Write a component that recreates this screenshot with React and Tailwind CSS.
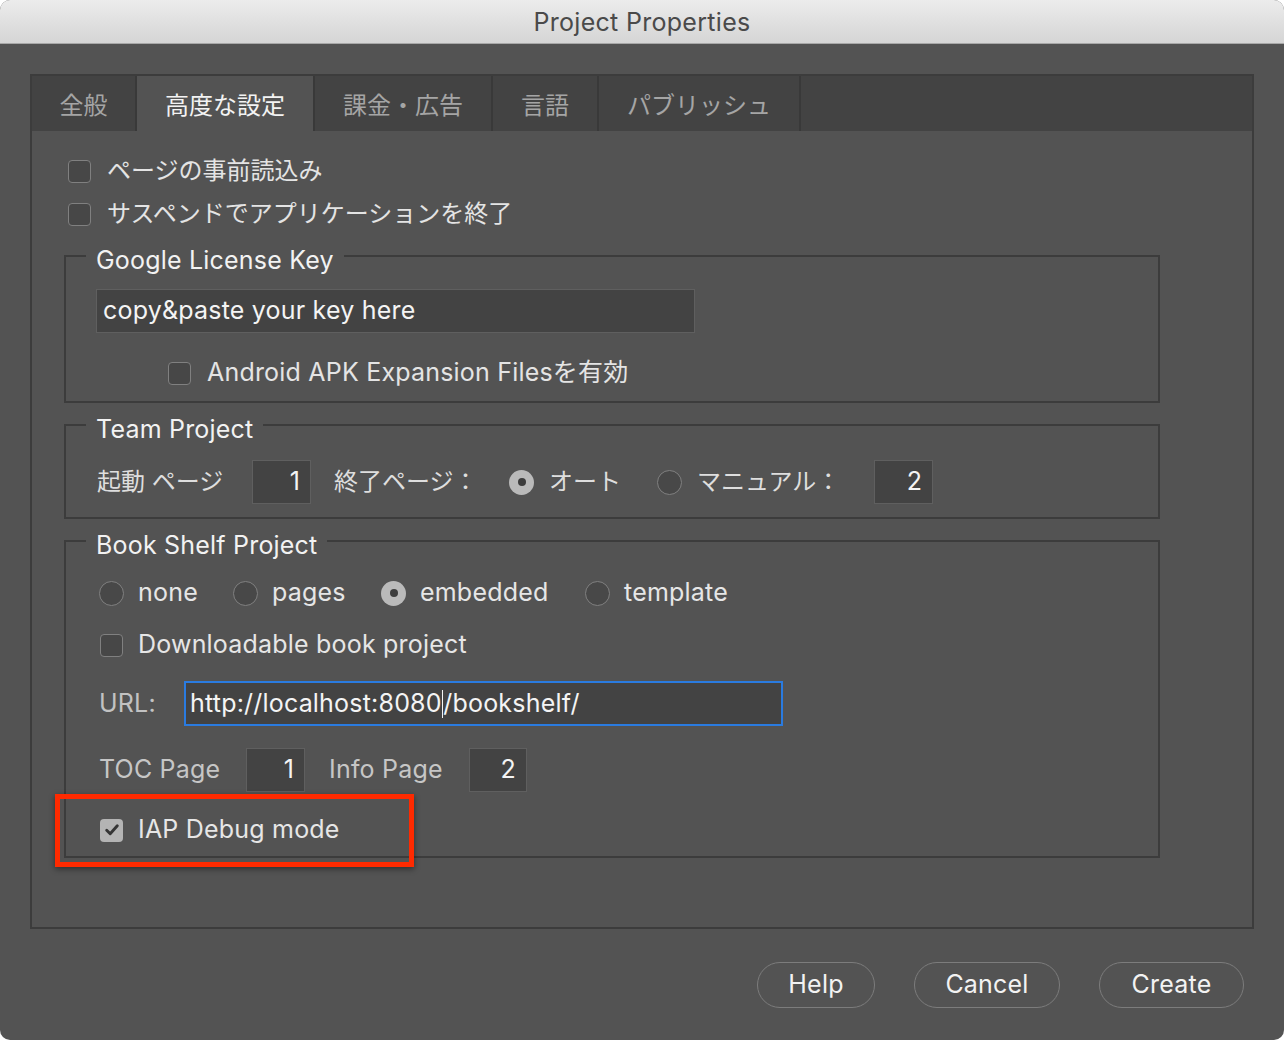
import React from 'react';

function Checkbox({ checked }) {
    if (checked) {
        return (
            <span className="flex h-[23px] w-[23px] shrink-0 items-center justify-center rounded-[4px] bg-[#b4b4b4]">
                <svg viewBox="0 0 16 16" className="h-[18px] w-[18px]">
                    <path d="M3.3 8.2l3.1 3.1 6.3-7" fill="none" stroke="#353535" strokeWidth="2.6" strokeLinecap="round" strokeLinejoin="round" />
                </svg>
            </span>
        );
    }
    return <span className="h-[23px] w-[23px] shrink-0 rounded-[4px] border-[1.5px] border-[#808080] bg-[#474747]" />;
}

function Radio({ checked }) {
    if (checked) {
        return (
            <span className="flex h-[25px] w-[25px] shrink-0 items-center justify-center rounded-full bg-[#bababa]">
                <span className="h-[8px] w-[8px] rounded-full bg-[#3d3d3d]" />
            </span>
        );
    }
    return <span className="h-[25px] w-[25px] shrink-0 rounded-full border-[1.5px] border-[#808080] bg-[#484848]" />;
}

function NumBox({ value, w = 'w-[59px]' }) {
    return (
        <div className={`flex h-[44px] ${w} shrink-0 items-center justify-end border border-[#5f5f5f] bg-[#434343] pr-[10px] text-[25px] text-[#f4f4f4]`}>
            {value}
        </div>
    );
}

function Group({ title, className, children }) {
    return (
        <fieldset className={`ml-[32px] w-[1096px] border-2 border-[#3c3c3c] p-0 ${className}`}>
            <legend className="ml-[20px] px-[10px] text-[25px] leading-[30px] tracking-[0.2px] text-[#f2f2f2]">
                <span className="relative top-[4px]">{title}</span>
            </legend>
            <div className="pl-[30px]">{children}</div>
        </fieldset>
    );
}

const tabs = [
    { label: '全般', w: 'w-[105px]' },
    { label: '高度な設定', w: 'w-[178px]', active: true },
    { label: '課金・広告', w: 'w-[178px]' },
    { label: '言語', w: 'w-[106px]' },
    { label: 'パブリッシュ', w: 'w-[202px]' },
];

export default function App() {
    return (
        <div className="relative h-[1040px] w-[1284px] overflow-hidden rounded-[10px] bg-[#535353] font-['Inter','Noto_Sans_CJK_JP',sans-serif]">

            {/* Title bar */}
            <div className="flex h-[44px] items-center justify-center border-b border-[#a8a8a8] bg-gradient-to-b from-[#ececec] to-[#d5d5d5] pt-[3px]">
                <span className="text-[25px] tracking-[0.3px] text-[#4a4a4a]">Project Properties</span>
            </div>

            {/* Tab panel */}
            <div className="ml-[30px] mt-[30px] flex h-[855px] w-[1224px] flex-col border-2 border-[#3c3c3c]">
                <div className="flex h-[55px] shrink-0 bg-[#434343]">
                    {tabs.map((t) => (
                        <div
                            key={t.label}
                            className={`flex ${t.w} items-center justify-center border-r-2 border-[#393939] pt-[5px] text-[24px] ${
                                t.active ? 'bg-[#535353] text-[#f3f3f3]' : 'text-[#a5a5a5]'
                            }`}
                        >
                            {t.label}
                        </div>
                    ))}
                </div>

                <div className="flex flex-col pt-[20px]">
                    {/* Top checkboxes */}
                    <div className="ml-[36px] flex h-[40px] items-center gap-[16px] text-[24px] text-[#e4e4e4]">
                        <Checkbox />
                        <span>ページの事前読込み</span>
                    </div>
                    <div className="ml-[36px] mt-[3px] flex h-[40px] items-center gap-[16px] text-[24px] text-[#e4e4e4]">
                        <Checkbox />
                        <span>サスペンドでアプリケーションを終了</span>
                    </div>

                    {/* Google License Key */}
                    <Group title="Google License Key" className="mt-[7px]">
                        <div className="mt-[18px] flex h-[44px] w-[599px] items-center border border-[#5f5f5f] bg-[#434343] pl-[6px] text-[25px] tracking-[0.2px] text-[#f4f4f4]">
                            copy&amp;paste your key here
                        </div>
                        <div className="ml-[72px] mt-[20px] mb-[8px] flex h-[40px] items-center gap-[16px] text-[25px] tracking-[0.2px] text-[#e4e4e4]">
                            <Checkbox />
                            <span>Android APK Expansion Filesを有効</span>
                        </div>
                    </Group>

                    {/* Team Project */}
                    <Group title="Team Project" className="mt-[7px]">
                        <div className="mt-[20px] mb-[13px] flex h-[44px] items-center text-[24px] text-[#dedede]">
                            <span className="ml-[1px] w-[155px]">起動 ページ</span>
                            <NumBox value="1" />
                            <span className="ml-[23px] w-[175px]">終了ページ：</span>
                            <Radio checked />
                            <span className="ml-[15px] w-[108px]">オート</span>
                            <Radio />
                            <span className="ml-[15px] w-[177px]">マニュアル：</span>
                            <NumBox value="2" />
                        </div>
                    </Group>

                    {/* Book Shelf Project */}
                    <Group title="Book Shelf Project" className="mt-[7px]">
                        <div className="ml-[3px] mt-[17px] flex h-[40px] items-center text-[25px] tracking-[0.2px] text-[#e6e6e6]">
                            <Radio />
                            <span className="ml-[14px] w-[95px]">none</span>
                            <Radio />
                            <span className="ml-[14px] w-[109px]">pages</span>
                            <Radio checked />
                            <span className="ml-[14px] w-[165px]">embedded</span>
                            <Radio />
                            <span className="ml-[14px]">template</span>
                        </div>
                        <div className="ml-[4px] mt-[12px] flex h-[40px] items-center gap-[15px] text-[25px] tracking-[0.2px] text-[#e6e6e6]">
                            <Checkbox />
                            <span>Downloadable book project</span>
                        </div>
                        <div className="mt-[16px] flex h-[45px] items-center text-[25px] tracking-[0.2px]">
                            <span className="ml-[3px] w-[85px] text-[#c2c2c2]">URL:</span>
                            <div className="flex h-[45px] w-[599px] items-center border-2 border-[#2a7be0] bg-[#434343] pl-[4px] text-[#f4f4f4]">
                                http://localhost:8080
                                <span className="h-[28px] w-[1.5px] bg-[#f4f4f4]" />
                                /bookshelf/
                            </div>
                        </div>
                        <div className="mt-[22px] flex h-[44px] items-center text-[25px] tracking-[0.2px] text-[#c6c6c6]">
                            <span className="ml-[3px] w-[147px]">TOC Page</span>
                            <NumBox value="1" />
                            <span className="ml-[24px] w-[140px]">Info Page</span>
                            <NumBox value="2" w="w-[58px]" />
                        </div>
                        <div className="ml-[4px] mt-[18px] mb-[6px] flex h-[40px] items-center gap-[15px] text-[25px] tracking-[0.2px] text-[#e6e6e6]">
                            <Checkbox checked />
                            <span>IAP Debug mode</span>
                        </div>
                    </Group>
                </div>
            </div>

            {/* Buttons */}
            <div className="mr-[40px] mt-[33px] flex justify-end gap-[39px] text-[25px] tracking-[0.2px] text-[#f2f2f2]">
                <button className="h-[46px] w-[118px] rounded-full border-[1.5px] border-[#7c7c7c]">Help</button>
                <button className="h-[46px] w-[146px] rounded-full border-[1.5px] border-[#7c7c7c]">Cancel</button>
                <button className="h-[46px] w-[145px] rounded-full border-[1.5px] border-[#7c7c7c]">Create</button>
            </div>

            {/* Highlight annotation */}
            <div className="pointer-events-none absolute left-[55px] top-[794px] h-[73px] w-[359px] border-[5px] border-[#ff2a00] shadow-[0_2px_6px_rgba(0,0,0,0.45)]" />
        </div>
    );
}
